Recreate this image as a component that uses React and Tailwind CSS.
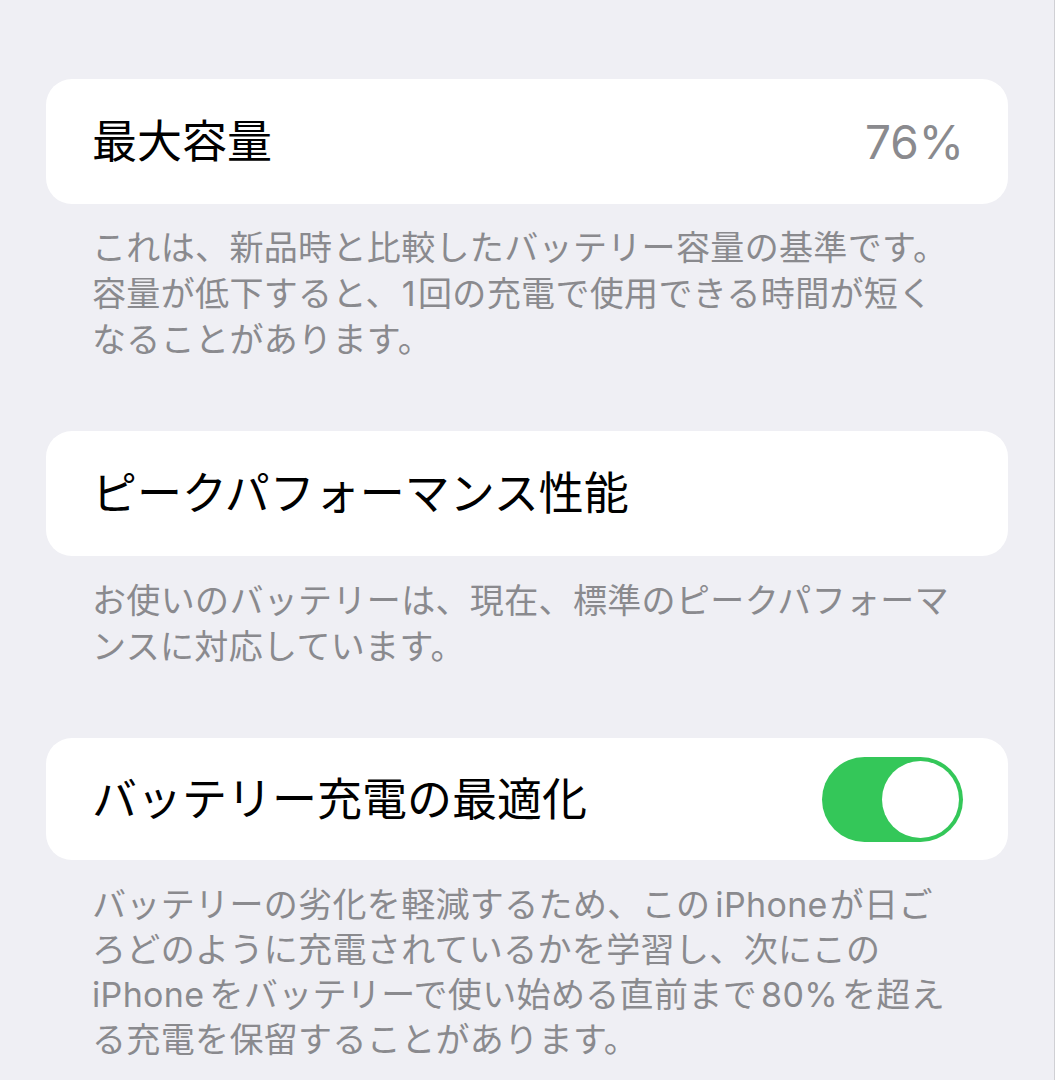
import React from "react";

const FONT = {
  fontFamily:
    'Inter, "Noto Sans CJK JP", "Noto Sans", sans-serif',
};

function Card({ children, h = "h-[125px]" }) {
  return (
    <div
      className={`w-[962px] ${h} rounded-[26px] bg-white flex items-center justify-between pl-[46px] pr-[46px]`}
    >
      {children}
    </div>
  );
}

function Desc({ lines, leading = "leading-[46px]", top = "pt-[21px]" }) {
  return (
    <div
      className={`${top} pl-[46px] text-[34px] tracking-[0.35px] ${leading} text-[#8a8a8e] whitespace-nowrap`}
    >
      {lines.map((l, i) => (
        <div key={i}>{l}</div>
      ))}
    </div>
  );
}

export default function App() {
  return (
    <div
      style={FONT}
      className="w-[1055px] h-[1080px] bg-[#efeff4] border-r border-[#d0d0d4] overflow-hidden pt-[79px] pl-[46px]"
    >
      <Card>
        <span className="text-[45px] text-black leading-none">最大容量</span>
        <span className="text-[46px] text-[#8a8a8e] leading-none -mr-[2px]">76%</span>
      </Card>
      <Desc
        lines={[
          "これは、新品時と比較したバッテリー容量の基準です。",
          <>
            容量が低下すると、<span className="mx-[2px]">1</span>回の充電で使用できる時間が短く
          </>,
          "なることがあります。",
        ]}
      />

      <div className="mt-[68px]">
        <Card>
          <span className="text-[45px] text-black leading-none">
            ピークパフォーマンス性能
          </span>
        </Card>
      </div>
      <Desc
        top="pt-[22px]"
        lines={[
          "お使いのバッテリーは、現在、標準のピークパフォーマ",
          "ンスに対応しています。",
        ]}
      />

      <div className="mt-[68px]">
        <div className="w-[962px] h-[122px] rounded-[26px] bg-white flex items-center justify-between pl-[46px] pr-[45px]">
          <span className="text-[45px] text-black leading-none">
            バッテリー充電の最適化
          </span>
          <div className="w-[141px] h-[85px] rounded-full bg-[#34c759] p-[4px] flex justify-end">
            <div className="w-[77px] h-[77px] rounded-full bg-white" />
          </div>
        </div>
      </div>
      <Desc
        top="pt-[22px]"
        leading="leading-[45px]"
        lines={[
          <>
            バッテリーの劣化を軽減するため、この
            <span className="ml-[5px] mr-[2px]">iPhone</span>が日ご
          </>,
          "ろどのように充電されているかを学習し、次にこの",
          <>
            <span className="mr-[5px]">iPhone</span>をバッテリーで使い始める直前まで
            <span className="ml-[4px] mr-[4px]">80%</span>を超え
          </>,
          "る充電を保留することがあります。",
        ]}
      />
    </div>
  );
}
